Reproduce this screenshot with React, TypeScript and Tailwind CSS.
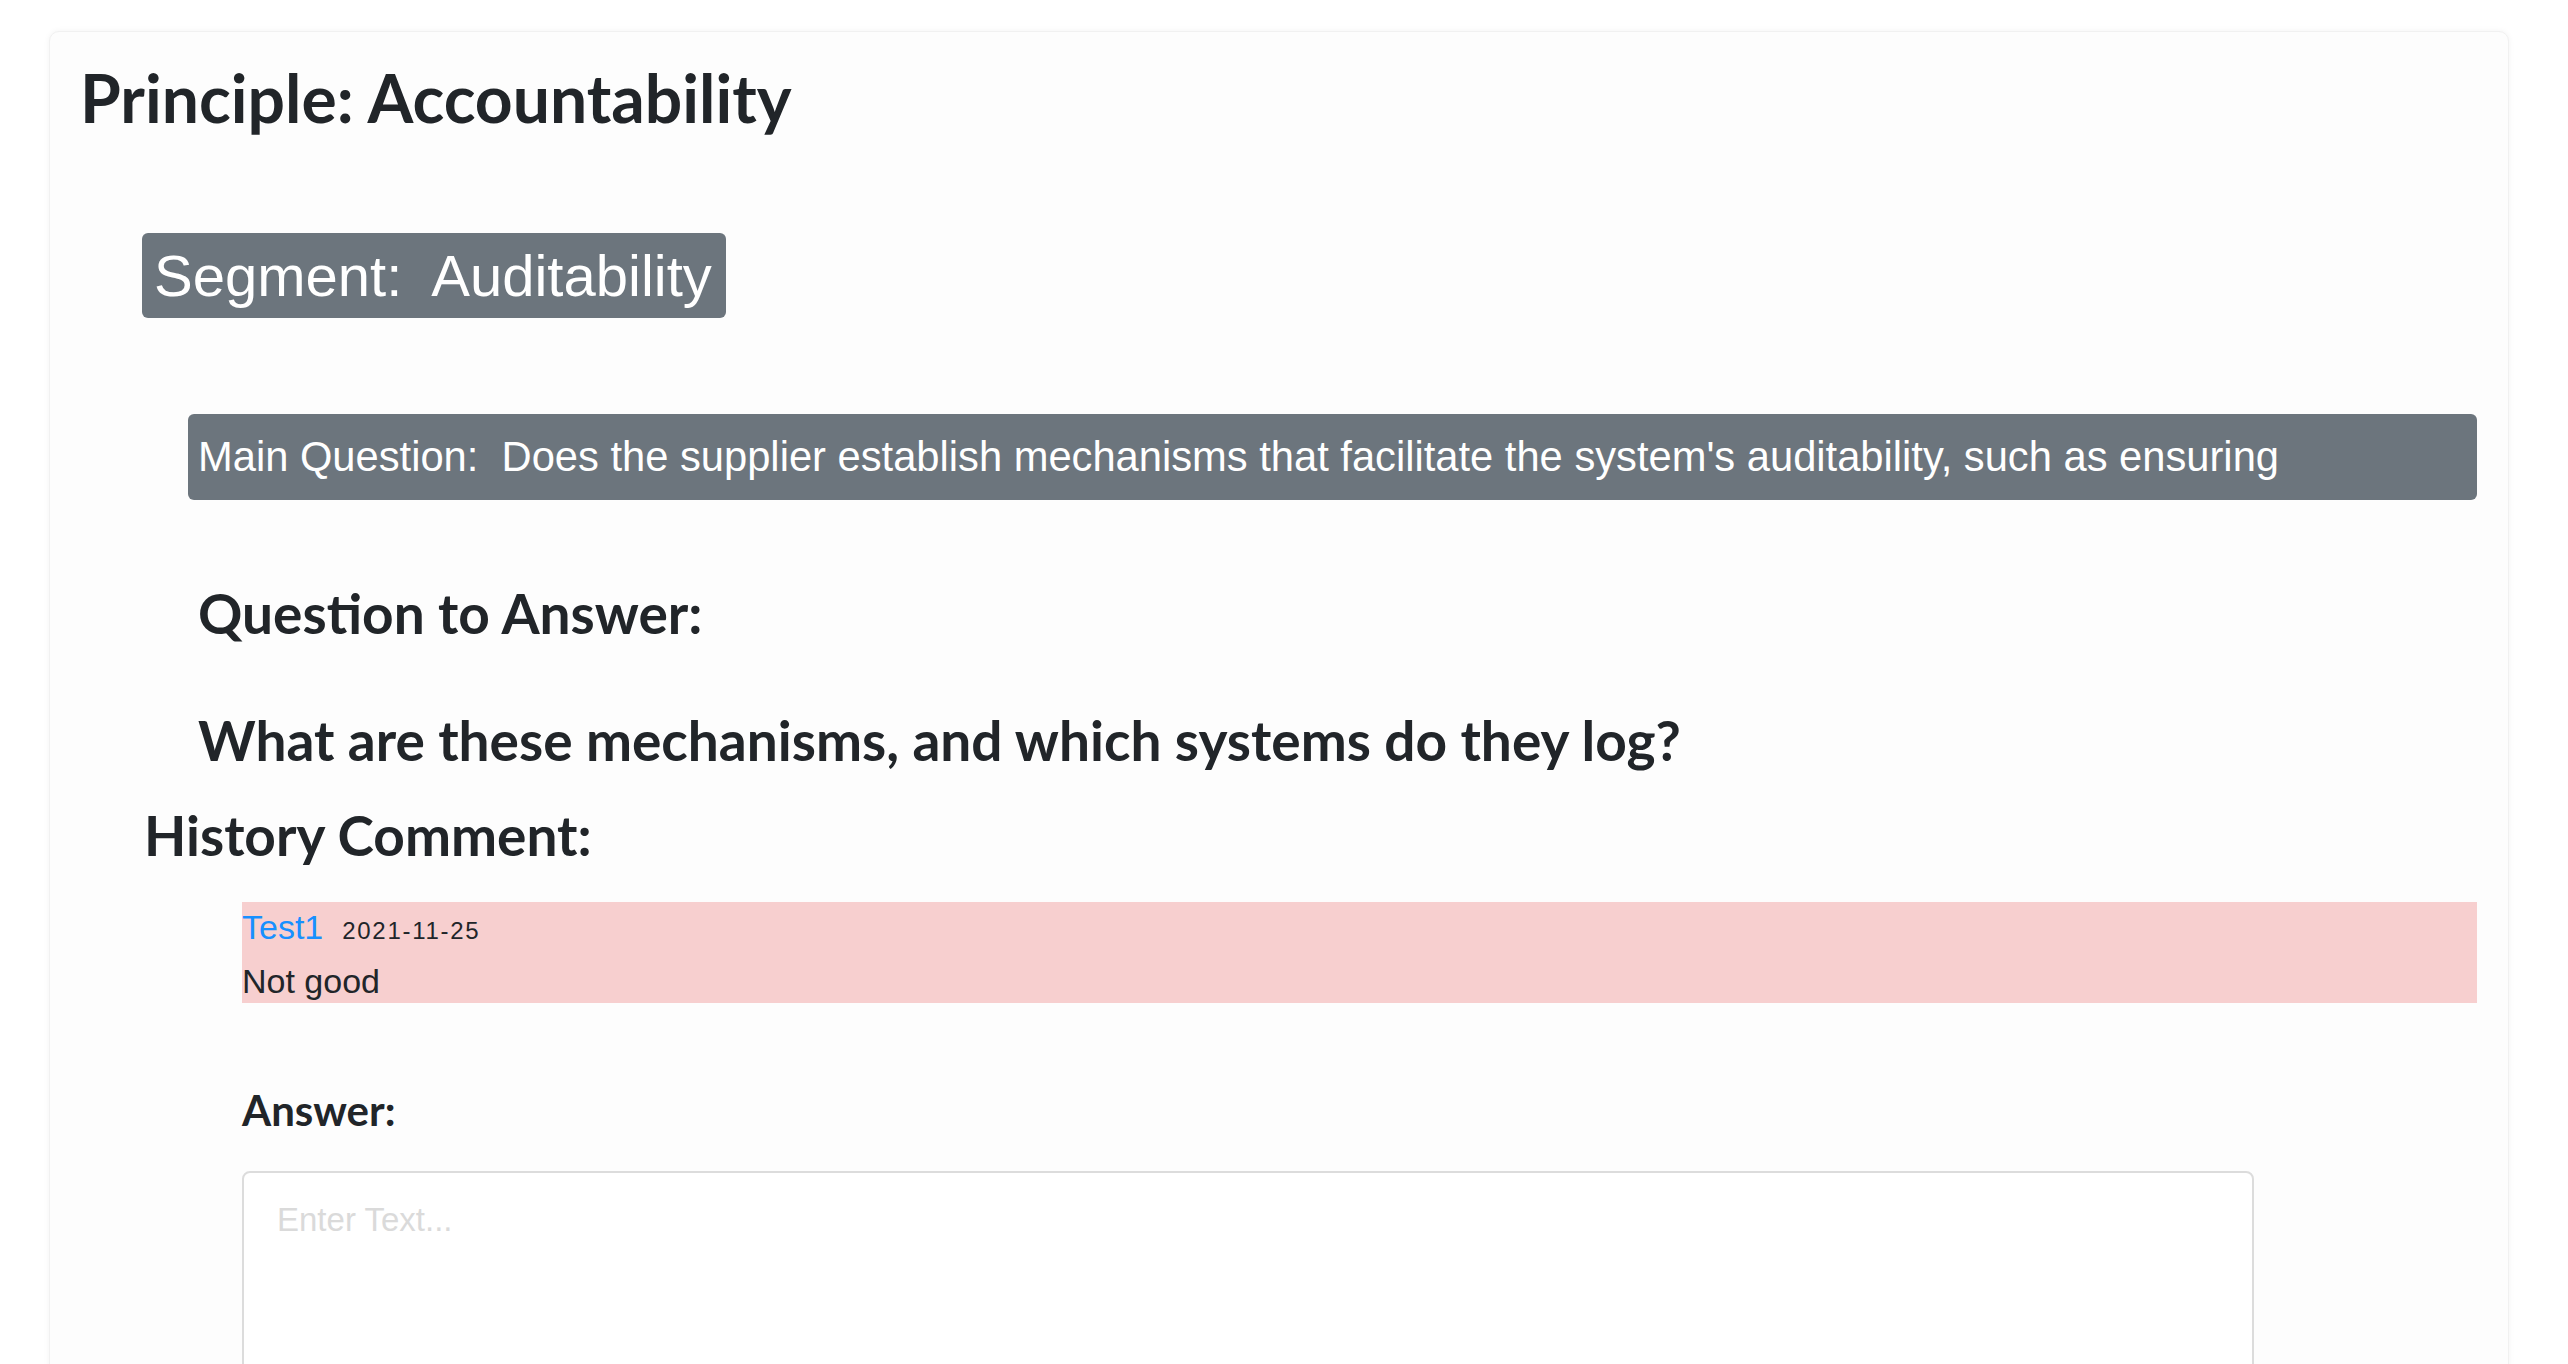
import React, { useState } from "react";

const lato = "font-['Lato',sans-serif]";
const sans = "font-['Liberation_Sans',Arial,sans-serif]";

type HistoryItem = {
  author: string;
  date: string;
  text: string;
};

const history: HistoryItem[] = [
  { author: "Test1", date: "2021-11-25", text: "Not good" },
];

const App: React.FC = () => {
  const [answer, setAnswer] = useState("");

  return (
    <div className="min-h-screen bg-white pt-[31px] overflow-hidden">
      <div className="ml-[49px] w-[2460px] min-h-[1400px] rounded-[10px] border border-[#f1f1f1] bg-[#fdfdfd] shadow-[0_0_6px_rgba(0,0,0,0.05)] pl-[30px] pr-[31px] pt-[26px]">
        <h2 className={`${lato} text-[66px] leading-[1.2] font-bold text-[#212529]`}>
          Principle: Accountability
        </h2>

        <div className="mt-[96px] ml-[62px]">
          <div
            className={`${sans} inline-block rounded-[6px] bg-[#6c757d] pl-[12px] pr-[14px] text-[58px] leading-[85px] text-white`}
          >
            Segment:&nbsp; Auditability
          </div>
        </div>

        <div
          className={`${sans} mt-[96px] ml-[108px] overflow-hidden whitespace-nowrap rounded-[6px] bg-[#6c757d] px-[10px] py-[13px] text-[41.7px] leading-[60px] text-white`}
        >
          Main Question:&nbsp; Does the supplier establish mechanisms that facilitate the system's auditability, such as ensuring
        </div>

        <h3 className={`${lato} mt-[80px] ml-[118px] text-[55px] leading-[1.2] font-bold text-[#212529]`}>
          Question to Answer:
        </h3>
        <h3 className={`${lato} mt-[61px] ml-[118px] text-[55px] leading-[1.2] font-bold text-[#212529]`}>
          What are these mechanisms, and which systems do they log?
        </h3>

        <h3 className={`${lato} mt-[29px] ml-[64px] text-[55px] leading-[1.2] font-bold text-[#212529]`}>
          History Comment:
        </h3>

        <div className="mt-[34px] ml-[162px]">
          {history.map((item, index) => (
            <div key={index} className={`${sans} h-[101px] bg-[#f7cfcf]`}>
              <div className="flex items-baseline gap-[19px] leading-[50px]">
                <span className="text-[34px] text-[#1890ff]">{item.author}</span>
                <span className="text-[24px] tracking-[1.7px] text-[#212529]">{item.date}</span>
              </div>
              <div className="text-[34px] leading-[50px] text-[#212529]">{item.text}</div>
            </div>
          ))}
        </div>

        <div className={`${lato} mt-[82px] ml-[162px] text-[42px] leading-[1.2] font-bold text-[#212529]`}>
          Answer:
        </div>

        <textarea
          value={answer}
          onChange={(e) => setAnswer(e.target.value)}
          placeholder="Enter Text..."
          className={`${sans} mt-[35px] ml-[162px] block h-[320px] w-[2012px] resize-none rounded-[8px] border-2 border-[#dcdcdc] bg-white pl-[33px] pt-[23px] text-[33px] leading-[48px] text-[#212529] outline-none placeholder:text-[#dadada]`}
        />
      </div>
    </div>
  );
};

export default App;
